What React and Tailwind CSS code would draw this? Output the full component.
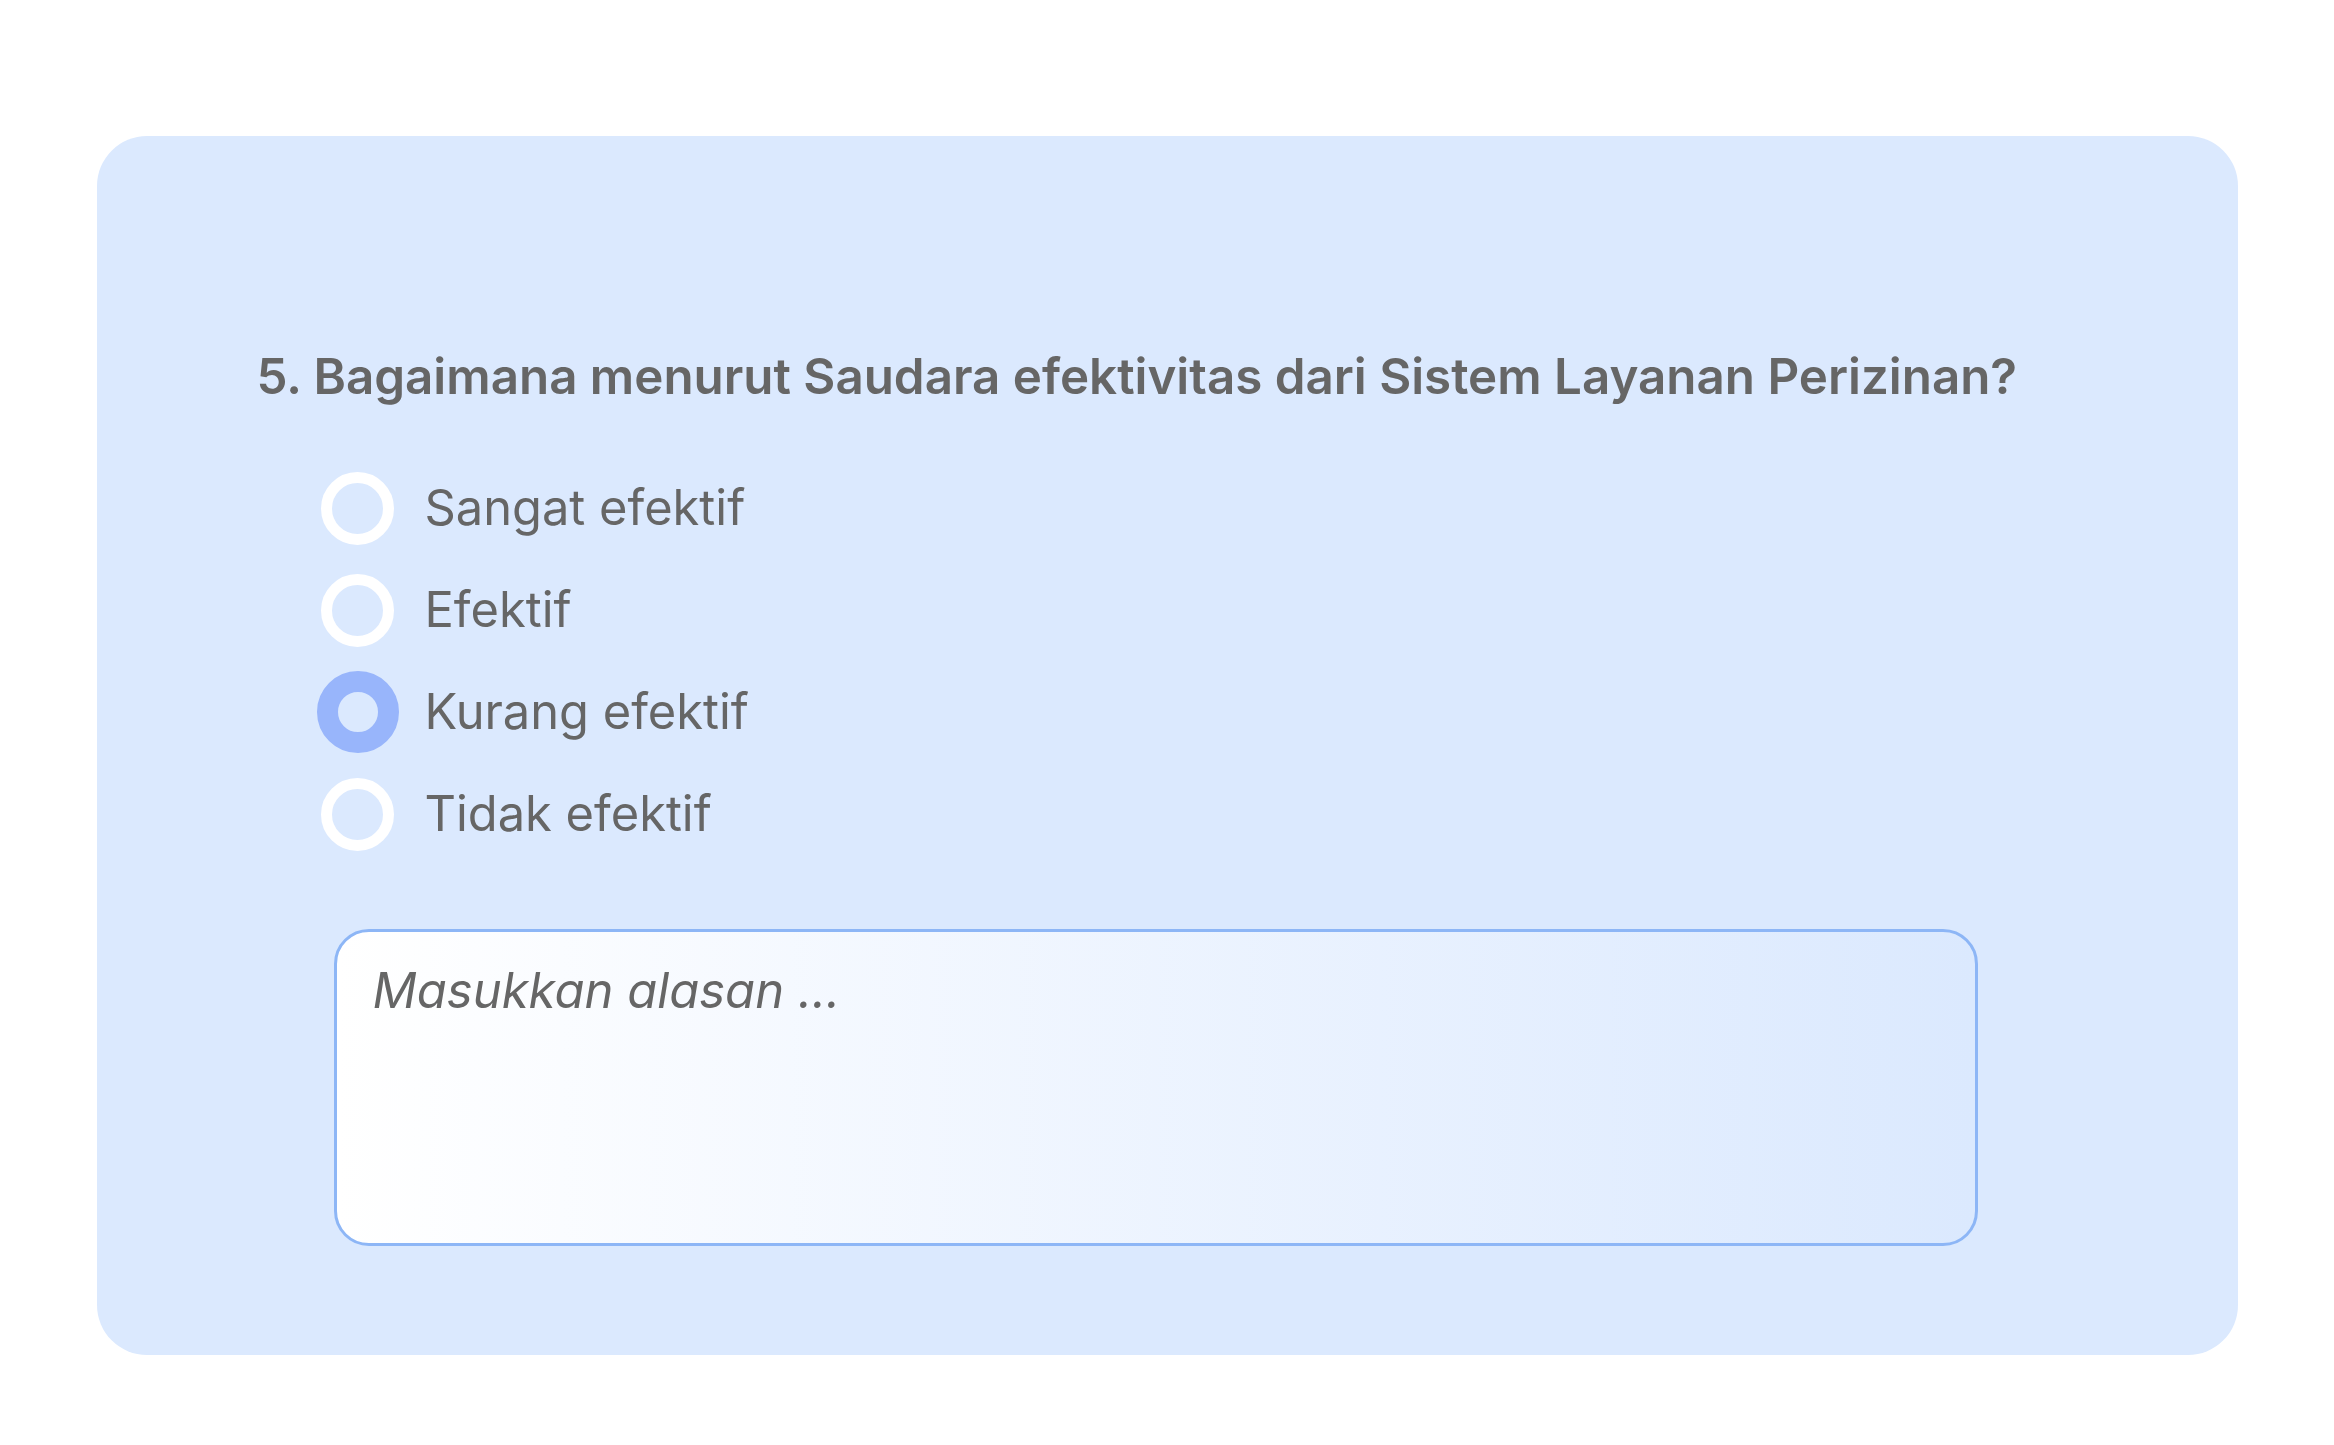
import { useState } from "react";

const OPTIONS = ["Sangat efektif", "Efektif", "Kurang efektif", "Tidak efektif"];

export default function App() {
  const [picked, setPicked] = useState("Kurang efektif");
  const [reason, setReason] = useState("");

  return (
    <main
      className="min-h-screen bg-white pt-[136px] px-[96px]"
      style={{ fontFamily: "Inter, 'Noto Sans', sans-serif" }}
    >
      <div className="mx-auto w-[2141px] h-[1219px] rounded-[50px] bg-[#dbe9fe] pl-[160px] pt-[211px]">
        <h2 className="text-[49.3px] leading-[58px] font-semibold text-[#666666]">
          5. Bagaimana menurut Saudara efektivitas dari Sistem Layanan Perizinan?
        </h2>

        {/* options */}
        <div className="mt-[62px] ml-[60px] flex flex-col gap-[20px]">
          {OPTIONS.map((opt) => {
            const on = picked === opt;
            return (
              <label
                key={opt}
                onClick={() => setPicked(opt)}
                className="flex items-center h-[82px] cursor-pointer"
              >
                <span className="w-[82px] h-[82px] flex items-center justify-center shrink-0">
                  {on ? (
                    <span className="w-[82px] h-[82px] rounded-full border-[21px] border-[#98b5fb] bg-[#dbe9fe]" />
                  ) : (
                    <span className="w-[73px] h-[73px] rounded-full border-[11px] border-white bg-[#dbe9fe]" />
                  )}
                </span>
                <span className="ml-[26px] text-[48.8px] leading-[58px] text-[#666666]">
                  {opt}
                </span>
              </label>
            );
          })}
        </div>

        {/* reason */}
        <textarea
          value={reason}
          onChange={(e) => setReason(e.target.value)}
          placeholder="Masukkan alasan ..."
          className="block mt-[74px] ml-[77px] w-[1644px] h-[317px] resize-none rounded-[35px] border-[3.5px] border-[#8db6f6] bg-gradient-to-r from-white to-[#dbe9fe] px-[36px] pt-[30px] text-[49px] leading-[58px] italic text-[#666666] placeholder:text-[#666666] outline-none"
        />
      </div>
    </main>
  );
}
